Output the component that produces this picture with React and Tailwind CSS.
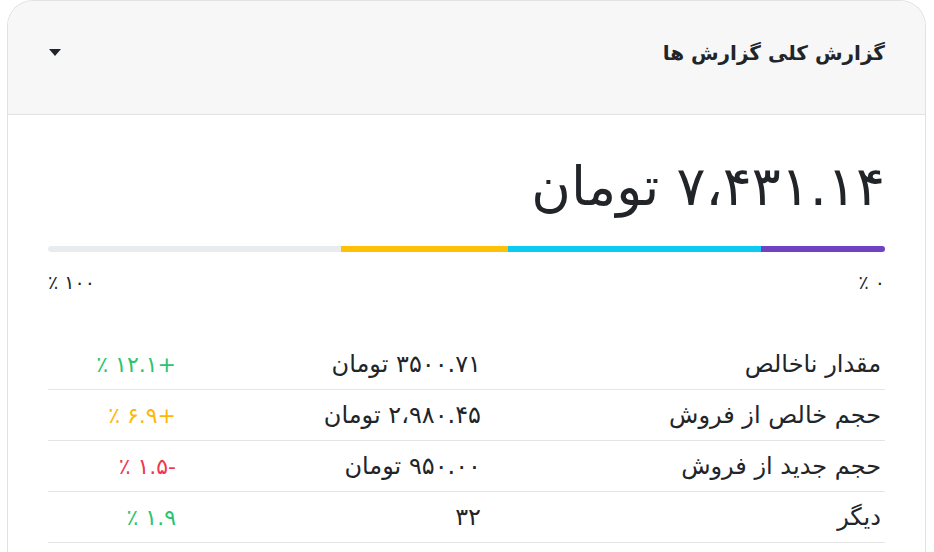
import React from 'react';

const rows = [
  { label: 'مقدار ناخالص', value: '۳۵۰۰.۷۱ تومان', change: '٪ ۱۲.۱+', color: 'text-[#2bc46d]' },
  { label: 'حجم خالص از فروش', value: '۲،۹۸۰.۴۵ تومان', change: '٪ ۶.۹+', color: 'text-[#ffb60a]' },
  { label: 'حجم جدید از فروش', value: '۹۵۰.۰۰ تومان', change: '٪ ۱.۵-', color: 'text-[#f0364f]' },
  { label: 'دیگر', value: '۳۲', change: '٪ ۱.۹', color: 'text-[#2bc46d]' },
];

export default function App() {
  return (
    <div
      dir="rtl"
      className="w-[934px] h-[552px] overflow-hidden bg-white pr-[8px] pl-[7px]"
      style={{ fontFamily: '"DejaVu Sans", "Noto Sans", sans-serif' }}
    >
      <div className="border-x border-t border-[#e2e2e2] rounded-t-[26px] bg-white h-[600px]">
        {/* Header */}
        <div className="h-[114px] bg-[#f7f7f7] border-b border-[#e2e2e2] rounded-t-[26px] flex items-center justify-between pr-[40px] pl-[40px] pb-[10px]">
          <h2 className="text-[20px] font-bold text-[#212529]">گزارش کلی گزارش ها</h2>
          <svg width="12" height="7" viewBox="0 0 12 7" className="ml-[1px]">
            <path d="M0 0h12L6 7z" fill="#212529" />
          </svg>
        </div>

        {/* Body */}
        <div className="px-[40px] pt-[36px]">
          <div className="text-[54px] leading-[72px] text-[#212529]">۷،۴۳۱.۱۴ تومان</div>

          {/* Progress */}
          <div className="mt-[23px] h-[6px] rounded-full bg-[#e9ecef] flex overflow-hidden">
            <div className="h-full bg-[#6f42c1]" style={{ width: '14.8%' }} />
            <div className="h-full bg-[#0dcaf0]" style={{ width: '30.2%' }} />
            <div className="h-full bg-[#ffc107]" style={{ width: '20%' }} />
          </div>
          <div className="mt-[18px] flex justify-between text-[19px] leading-[24px] text-[#212529]">
            <span>۰ ٪</span>
            <span>۱۰۰ ٪</span>
          </div>

          {/* Table */}
          <div className="mt-[45px]">
            {rows.map((r) => (
              <div
                key={r.label}
                className="grid grid-cols-[404px_305px_1fr] h-[51px] items-center border-b border-[#e5e5e5] text-[24px] text-[#212529]"
              >
                <span className="pr-[4px]">{r.label}</span>
                <span>{r.value}</span>
                <span dir="ltr" className={`text-right text-[22px] ${r.color}`}>{r.change}</span>
              </div>
            ))}
          </div>
        </div>
      </div>
    </div>
  );
}
